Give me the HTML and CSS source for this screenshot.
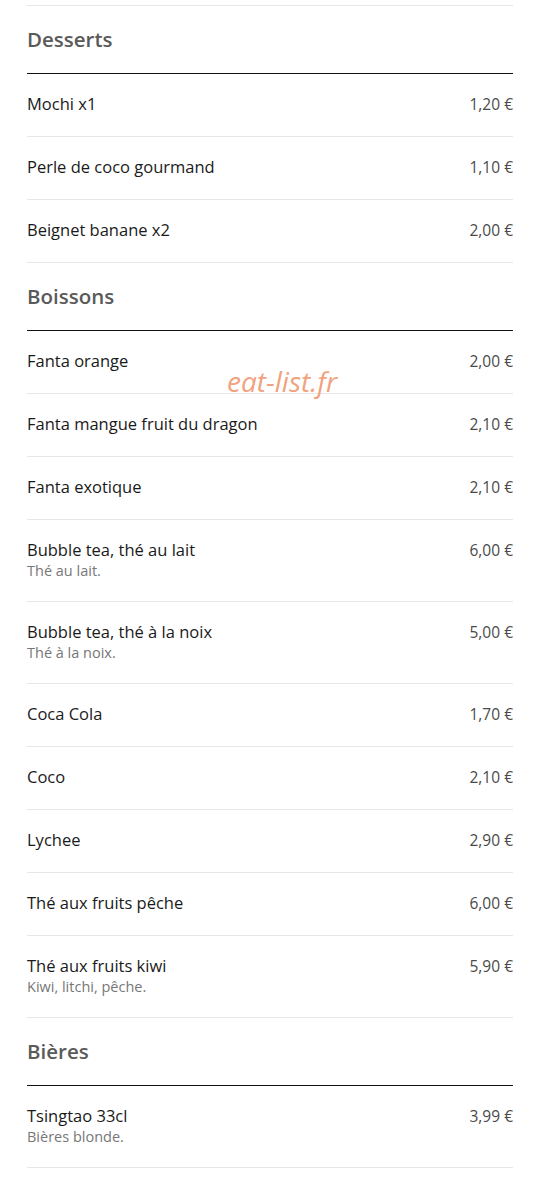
FILE: index.html
```html
<!DOCTYPE html>
<html lang="fr">
<head>
    <meta charset="UTF-8">
    <meta name="viewport" content="width=device-width, initial-scale=1.0">
    <title>Menu</title>
    <link rel="stylesheet" href="styles.css">
</head>
<body>

<div id="menu">
    <div class="section">
        <h2 class="section-title">Desserts</h2>
        <div class="item">
            <div class="item-info"><div class="item-name">Mochi x1</div></div>
            <div class="item-price">1,20 €</div>
        </div>
        <div class="item">
            <div class="item-info"><div class="item-name">Perle de coco gourmand</div></div>
            <div class="item-price">1,10 €</div>
        </div>
        <div class="item">
            <div class="item-info"><div class="item-name">Beignet banane x2</div></div>
            <div class="item-price">2,00 €</div>
        </div>
    </div>

    <div class="section">
        <h2 class="section-title">Boissons</h2>
        <div class="item">
            <div class="item-info"><div class="item-name">Fanta orange</div></div>
            <div class="item-price">2,00 €</div>
        </div>
        <div class="item">
            <div class="item-info"><div class="item-name">Fanta mangue fruit du dragon</div></div>
            <div class="item-price">2,10 €</div>
        </div>
        <div class="item">
            <div class="item-info"><div class="item-name">Fanta exotique</div></div>
            <div class="item-price">2,10 €</div>
        </div>
        <div class="item">
            <div class="item-info">
                <div class="item-name">Bubble tea, thé au lait</div>
                <div class="item-desc">Thé au lait.</div>
            </div>
            <div class="item-price">6,00 €</div>
        </div>
        <div class="item">
            <div class="item-info">
                <div class="item-name">Bubble tea, thé à la noix</div>
                <div class="item-desc">Thé à la noix.</div>
            </div>
            <div class="item-price">5,00 €</div>
        </div>
        <div class="item">
            <div class="item-info"><div class="item-name">Coca Cola</div></div>
            <div class="item-price">1,70 €</div>
        </div>
        <div class="item">
            <div class="item-info"><div class="item-name">Coco</div></div>
            <div class="item-price">2,10 €</div>
        </div>
        <div class="item">
            <div class="item-info"><div class="item-name">Lychee</div></div>
            <div class="item-price">2,90 €</div>
        </div>
        <div class="item">
            <div class="item-info"><div class="item-name">Thé aux fruits pêche</div></div>
            <div class="item-price">6,00 €</div>
        </div>
        <div class="item">
            <div class="item-info">
                <div class="item-name">Thé aux fruits kiwi</div>
                <div class="item-desc">Kiwi, litchi, pêche.</div>
            </div>
            <div class="item-price">5,90 €</div>
        </div>
    </div>

    <div class="section">
        <h2 class="section-title">Bières</h2>
        <div class="item">
            <div class="item-info">
                <div class="item-name">Tsingtao 33cl</div>
                <div class="item-desc">Bières blonde.</div>
            </div>
            <div class="item-price">3,99 €</div>
        </div>
    </div>
</div>

<div id="watermark">eat-list.fr</div>

</body>
</html>
```

FILE: styles.css
```css
body {
    font-family: 'Open Sans', 'Noto Sans', sans-serif;
    margin: 0;
    background-color: #ffffff;
    color: #222;
}
#menu {
    margin: 5px 43px 0 27px;
    border-top: 1px solid #e6e6e6;
}
.section-title {
    margin: 0;
    padding: 21px 0 22px;
    font-size: 20.5px;
    line-height: 24px;
    font-weight: 600;
    color: #5a5a5a;
    border-bottom: 1px solid #111;
}
.item {
    display: flex;
    justify-content: space-between;
    align-items: flex-start;
    padding: 19px 0 21px;
    border-bottom: 1px solid #e6e6e6;
}
.item-name {
    font-size: 16.5px;
    line-height: 22px;
    color: #1a1a1a;
}
.item-desc {
    font-size: 14.5px;
    line-height: 19px;
    color: #777;
}
.item-price {
    font-size: 15.5px;
    line-height: 22px;
    color: #4a4a4a;
    white-space: nowrap;
}
#watermark {
    position: absolute;
    top: 361px;
    left: 227px;
    font-size: 28px;
    line-height: 40px;
    font-style: italic;
    color: #f1a27e;
    pointer-events: none;
}
```
